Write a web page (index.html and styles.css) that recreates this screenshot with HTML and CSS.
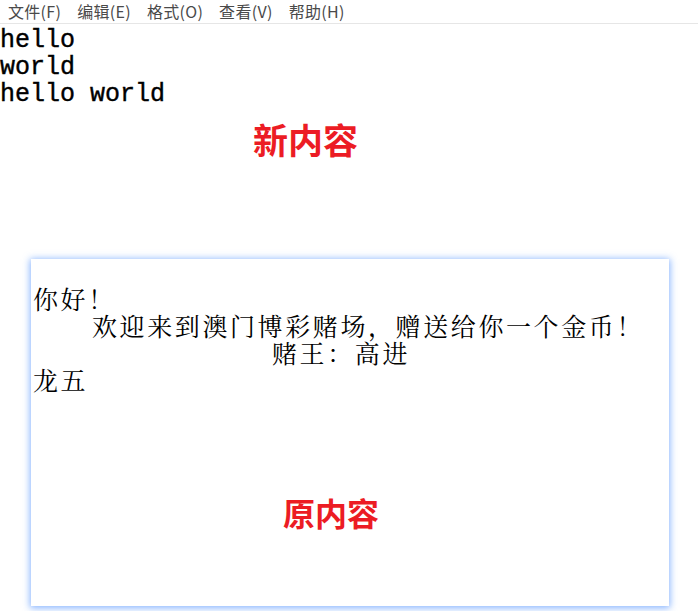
FILE: index.html
```html
<!DOCTYPE html>
<html lang="zh-CN">
<head>
<meta charset="utf-8">
<title>记事本</title>
<link rel="stylesheet" href="styles.css">
</head>
<body>
<div class="menubar">
  <span class="menu-item">文件(F)</span>
  <span class="menu-item">编辑(E)</span>
  <span class="menu-item">格式(O)</span>
  <span class="menu-item">查看(V)</span>
  <span class="menu-item">帮助(H)</span>
</div>
<div class="editor">
  <div class="code-line">hello</div>
  <div class="code-line">world</div>
  <div class="code-line">hello world</div>
</div>
<div class="label label-new">新内容</div>
<div class="letter">
  <div class="letter-line">你好！</div>
  <div class="letter-line indent">欢迎来到澳门博彩赌场，赠送给你一个金币！</div>
  <div class="letter-line sign">赌王：高进</div>
  <div class="letter-line">龙五</div>
  <div class="label label-old">原内容</div>
</div>
</body>
</html>
```
FILE: styles.css
```css
html, body {
  margin: 0;
  padding: 0;
  background: #ffffff;
}
body {
  width: 698px;
  height: 611px;
  overflow: hidden;
}
.menubar {
  height: 23px;
  border-bottom: 1px solid #e6e6e6;
  display: flex;
  align-items: center;
  gap: 16px;
  padding-left: 8px;
  font-family: "Noto Sans CJK SC", "Noto Sans", sans-serif;
  font-size: 16px;
  letter-spacing: 0.3px;
  color: #4a4a4a;
  line-height: 23px;
}
.editor {
  margin-top: 3px;
  font-family: "Liberation Mono", "DejaVu Sans Mono", monospace;
  font-size: 25px;
  line-height: 27px;
  color: #000;
  -webkit-text-stroke: 0.4px #000;
}
.code-line {
  white-space: pre;
}
.label {
  font-family: "Noto Sans CJK SC", "Noto Sans", sans-serif;
  font-weight: 700;
  color: #ec1c24;
  line-height: 1;
}
.label-new {
  margin-top: 13px;
  padding-left: 253px;
  font-size: 35px;
}
.letter {
  box-sizing: border-box;
  margin-top: 103px;
  margin-left: 31px;
  width: 638px;
  height: 347px;
  padding: 26px 0 0 2px;
  background: #ffffff;
  box-shadow: 0 1px 7px 1px rgba(70, 140, 255, 0.65);
  font-family: "Noto Serif CJK SC", "Noto Sans CJK SC", serif;
  font-size: 25px;
  line-height: 27px;
  color: #000;
}
.letter-line {
  white-space: pre;
  letter-spacing: 2.6px;
}
.indent {
  padding-left: 59px;
}
.sign {
  padding-left: 239px;
}
.label-old {
  margin-top: 103px;
  padding-left: 250px;
  font-size: 32px;
  letter-spacing: 0;
}
```
